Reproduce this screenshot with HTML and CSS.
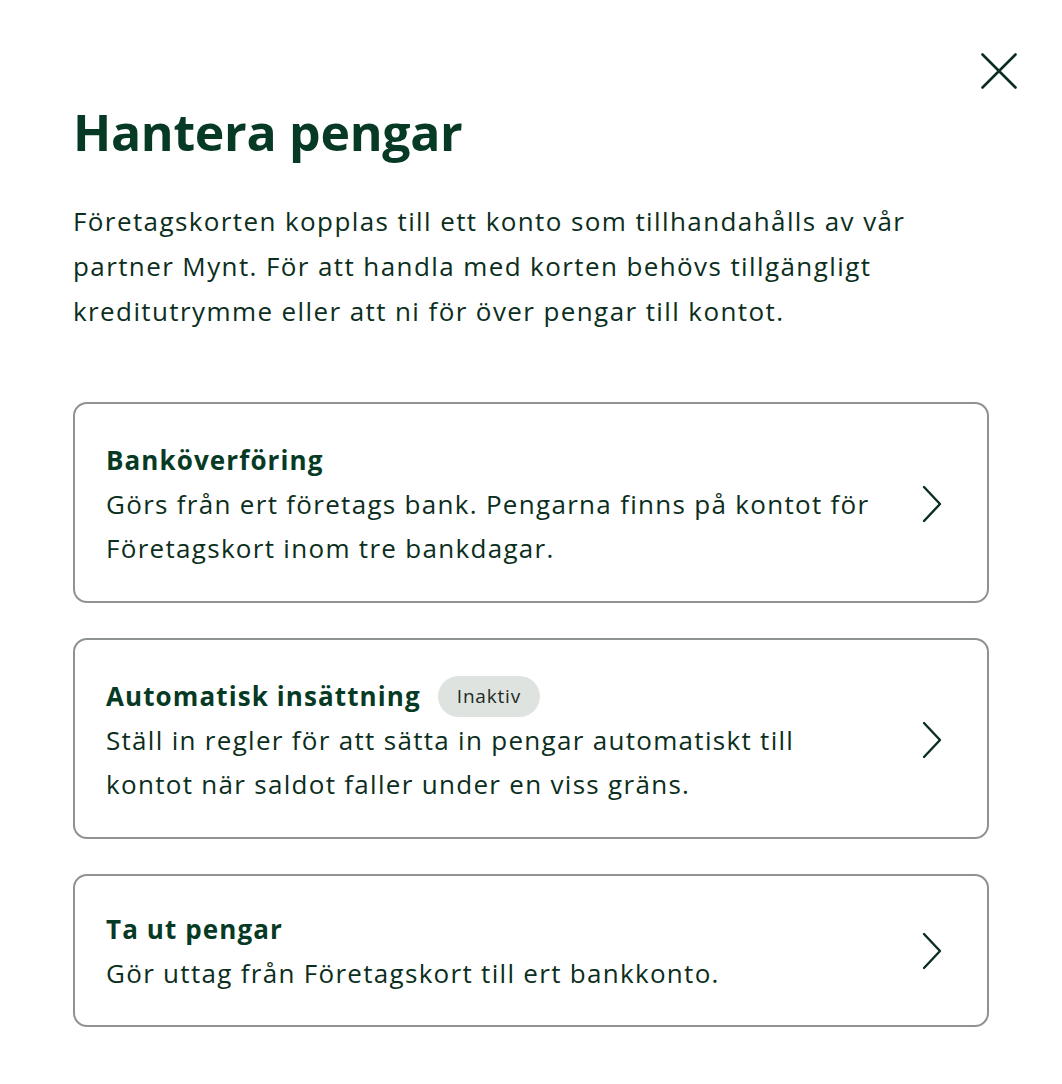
FILE: index.html
```html
<!DOCTYPE html>
<html lang="sv">

<head>
    <meta charset="UTF-8">
    <meta name="viewport" content="width=device-width, initial-scale=1.0">
    <title>Hantera pengar</title>
    <link rel="stylesheet" href="styles.css">
</head>

<body>
    <div class="dialog">
        <div class="dialog-top">
            <a href="javascript:;" class="close-btn" aria-label="Stäng">
                <svg width="36" height="36" viewBox="0 0 36 36" fill="none">
                    <path d="M1.5 1.5L34.5 34.5M34.5 1.5L1.5 34.5" stroke="#0b2e20" stroke-width="2.6" stroke-linecap="round" />
                </svg>
            </a>
        </div>
        <h1 class="dialog-title">Hantera pengar</h1>
        <p class="dialog-text">Företagskorten kopplas till ett konto som tillhandahålls av vår partner Mynt. För att handla med korten behövs tillgängligt kreditutrymme eller att ni för över pengar till kontot.</p>

        <div class="option-list">
            <a href="javascript:;" class="option">
                <div class="option-body">
                    <div class="option-title">Banköverföring</div>
                    <div class="option-text">Görs från ert företags bank. Pengarna finns på kontot för Företagskort inom tre bankdagar.</div>
                </div>
                <svg class="chevron" width="22" height="38" viewBox="0 0 22 38" fill="none">
                    <path d="M3 2L19 19L3 36" stroke="#0b2e20" stroke-width="2.4" stroke-linecap="round" stroke-linejoin="round" />
                </svg>
            </a>
            <a href="javascript:;" class="option">
                <div class="option-body">
                    <div class="option-title">Automatisk insättning <span class="badge">Inaktiv</span></div>
                    <div class="option-text">Ställ in regler för att sätta in pengar automatiskt till kontot när saldot faller under en viss gräns.</div>
                </div>
                <svg class="chevron" width="22" height="38" viewBox="0 0 22 38" fill="none">
                    <path d="M3 2L19 19L3 36" stroke="#0b2e20" stroke-width="2.4" stroke-linecap="round" stroke-linejoin="round" />
                </svg>
            </a>
            <a href="javascript:;" class="option option-short">
                <div class="option-body">
                    <div class="option-title">Ta ut pengar</div>
                    <div class="option-text">Gör uttag från Företagskort till ert bankkonto.</div>
                </div>
                <svg class="chevron" width="22" height="38" viewBox="0 0 22 38" fill="none">
                    <path d="M3 2L19 19L3 36" stroke="#0b2e20" stroke-width="2.4" stroke-linecap="round" stroke-linejoin="round" />
                </svg>
            </a>
        </div>
    </div>
</body>

</html>
```

FILE: styles.css
```css
* {
    box-sizing: border-box;
}

body,
h1,
p,
div {
    margin: 0px;
    padding: 0px;
}

body {
    background: #ffffff;
    color: #0b2e20;
    font-family: "Open Sans", "Noto Sans", sans-serif;
}

a {
    text-decoration: none;
    color: inherit;
}

.dialog {
    padding: 53px 45px 40px 73px;
}

.dialog-top {
    display: flex;
    justify-content: flex-end;
}

.close-btn {
    display: block;
    width: 36px;
    height: 36px;
}

.close-btn svg {
    display: block;
}

.dialog-title {
    margin-top: 11px;
    font-size: 50px;
    font-weight: 700;
    line-height: 64px;
    color: #063a25;
    letter-spacing: -0.3px;
}

.dialog-text {
    margin-top: 35px;
    width: 916px;
    font-size: 26px;
    line-height: 45px;
    letter-spacing: 1.4px;
}

.option-list {
    margin-top: 68px;
    width: 916px;
    display: flex;
    flex-direction: column;
    gap: 35px;
}

.option {
    display: flex;
    align-items: center;
    gap: 46px;
    padding: 34px 44px 31px 31px;
    border: 2px solid #8e9390;
    border-radius: 14px;
}

.option-short {
    padding-top: 31px;
    padding-bottom: 30px;
}

.option-body {
    flex: 1;
}

.option-title {
    display: flex;
    align-items: center;
    gap: 17px;
    height: 44px;
    font-size: 26px;
    font-weight: 700;
    line-height: 44px;
    color: #063a25;
    letter-spacing: 1.1px;
}

.option-text {
    font-size: 26px;
    line-height: 44px;
    letter-spacing: 1.3px;
}

.badge {
    display: inline-block;
    padding: 0px 19px;
    height: 41px;
    line-height: 41px;
    border-radius: 21px;
    background: #dfe3e0;
    font-size: 19px;
    font-weight: 400;
    color: #1d2a24;
    letter-spacing: 0.8px;
}

.chevron {
    flex: none;
    display: block;
}
```
